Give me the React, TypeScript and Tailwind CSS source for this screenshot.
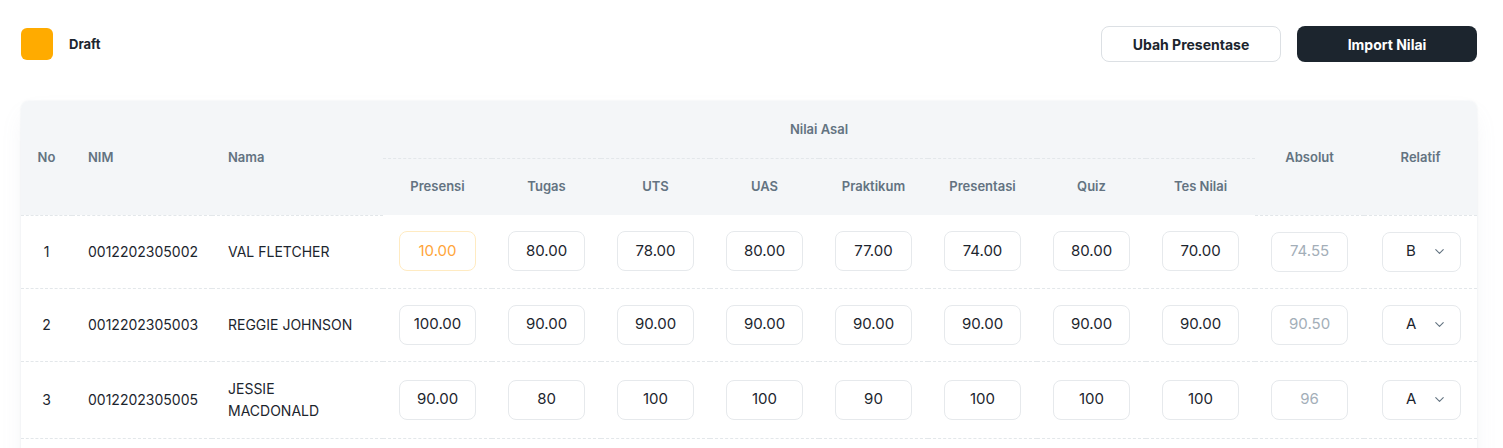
import { ChevronDown } from 'lucide-react';

interface Row {
  no: number;
  nim: string;
  nama: string;
  nilai: string[];
  absolut: string;
  relatif: string;
  warn?: boolean;
}

const rows: Row[] = [
  {
    no: 1,
    nim: '0012202305002',
    nama: 'VAL FLETCHER',
    nilai: ['10.00', '80.00', '78.00', '80.00', '77.00', '74.00', '80.00', '70.00'],
    absolut: '74.55',
    relatif: 'B',
    warn: true,
  },
  {
    no: 2,
    nim: '0012202305003',
    nama: 'REGGIE JOHNSON',
    nilai: ['100.00', '90.00', '90.00', '90.00', '90.00', '90.00', '90.00', '90.00'],
    absolut: '90.50',
    relatif: 'A',
  },
  {
    no: 3,
    nim: '0012202305005',
    nama: 'JESSIE MACDONALD',
    nilai: ['90.00', '80', '100', '100', '90', '100', '100', '100'],
    absolut: '96',
    relatif: 'A',
  },
];

const subHeads = ['Presensi', 'Tugas', 'UTS', 'UAS', 'Praktikum', 'Presentasi', 'Quiz', 'Tes Nilai'];

const font = { fontFamily: 'Inter, "Noto Sans", sans-serif' };

export default function App() {
  return (
    <div className="bg-white min-h-screen pl-[21px] pt-[26px]" style={font}>
      <div className="w-[1456px]">
        <div className="flex items-center justify-between h-9">
          <div className="flex items-center gap-4">
            <div className="w-8 h-8 rounded-md bg-[#FFAB00]" />
            <span className="text-[13px] font-bold text-[#1C252E] pt-px">Draft</span>
          </div>
          <div className="flex items-center gap-4">
            <button className="w-[180px] h-9 rounded-lg border border-[#DCE0E4] bg-white text-[14px] font-bold text-[#1C252E]">
              Ubah Presentase
            </button>
            <button className="w-[180px] h-9 rounded-lg bg-[#1C252E] text-[14px] font-bold text-white">
              Import Nilai
            </button>
          </div>
        </div>

        <div className="mt-[39px] pb-12 rounded-lg bg-white shadow-[0_0_2px_0_rgba(145,158,171,0.2),0_12px_24px_-4px_rgba(145,158,171,0.12)] overflow-hidden">
          <table className="w-full table-fixed border-collapse">
            <colgroup>
              <col className="w-[51px]" />
              <col className="w-[140px]" />
              <col className="w-[171px]" />
              {subHeads.map((h) => (
                <col key={h} className="w-[109px]" />
              ))}
              <col className="w-[109px]" />
              <col className="w-[113px]" />
            </colgroup>
            <thead className="bg-[#F4F6F8] text-[13px] font-semibold text-[#637381]">
              <tr className="h-[57px]">
                <th rowSpan={2} className="text-center font-semibold border-b border-dashed border-[#E3E7EA]">No</th>
                <th rowSpan={2} className="pl-4 text-left font-semibold border-b border-dashed border-[#E3E7EA]">NIM</th>
                <th rowSpan={2} className="pl-4 text-left font-semibold border-b border-dashed border-[#E3E7EA]">Nama</th>
                <th colSpan={8} className="text-center font-semibold border-b border-dashed border-[#E3E7EA]">Nilai Asal</th>
                <th rowSpan={2} className="text-center font-semibold border-b border-dashed border-[#E3E7EA]">Absolut</th>
                <th rowSpan={2} className="text-center font-semibold border-b border-dashed border-[#E3E7EA]">Relatif</th>
              </tr>
              <tr className="h-[57px]">
                {subHeads.map((h) => (
                  <th key={h} className="text-center font-semibold">{h}</th>
                ))}
              </tr>
            </thead>
            <tbody className="text-[14px] text-[#1C252E]">
              {rows.map((r) => (
                <tr key={r.no} className="border-b border-dashed border-[#E3E7EA]">
                  <td className="py-4 text-center">{r.no}</td>
                  <td className="pl-4 py-4">{r.nim}</td>
                  <td className="pl-4 pr-4 py-4 leading-[22px]">{r.nama}</td>
                  {r.nilai.map((v, i) => (
                    <td key={i} className="px-4 py-4">
                      <div
                        className={
                          r.warn && i === 0
                            ? 'w-[77px] h-10 rounded-lg border border-[#FFEBC2] flex items-center justify-center text-[15px] text-[#FFA53A]'
                            : 'w-[77px] h-10 rounded-lg border border-[#E6E9EC] flex items-center justify-center text-[15px] text-[#1C252E]'
                        }
                      >
                        {v}
                      </div>
                    </td>
                  ))}
                  <td className="px-4 py-4">
                    <div className="w-[77px] h-10 rounded-lg border border-[#E6E9EC] flex items-center justify-center text-[15px] text-[#A3AEB8]">
                      {r.absolut}
                    </div>
                  </td>
                  <td className="pl-[18px] py-4">
                    <div className="w-[79px] h-10 rounded-lg border border-[#E6E9EC] flex items-center pl-[23px] pr-[13px] justify-between text-[15px] text-[#1C252E]">
                      <span>{r.relatif}</span>
                      <ChevronDown className="w-[15px] h-[15px] text-[#637381]" strokeWidth={1.75} />
                    </div>
                  </td>
                </tr>
              ))}
            </tbody>
          </table>
        </div>
      </div>
    </div>
  );
}
